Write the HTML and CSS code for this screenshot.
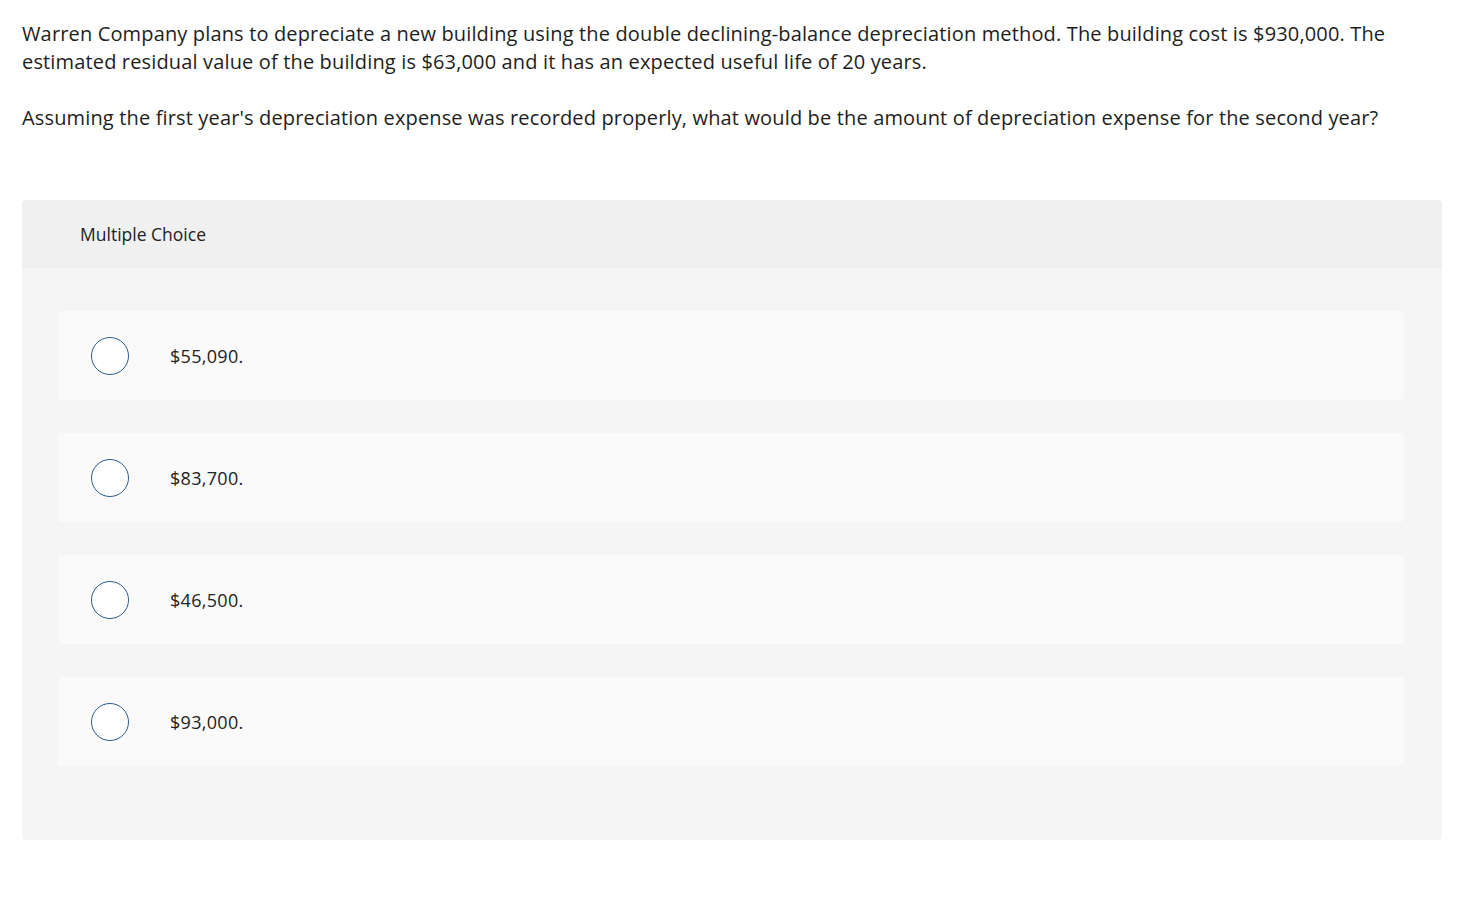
FILE: index.html
```html
<!DOCTYPE html>
<html>
<head>
<meta charset="utf-8">
<link rel="stylesheet" href="styles.css">
</head>
<body>
<div class="page">
  <div class="question">
    <p>Warren Company plans to depreciate a new building using the double declining-balance depreciation method. The building cost is $930,000. The estimated residual value of the building is $63,000 and it has an expected useful life of 20 years.</p>
    <p>Assuming the first year's depreciation expense was recorded properly, what would be the amount of depreciation expense for the second year?</p>
  </div>
  <div class="mc">
    <div class="mc-header">Multiple Choice</div>
    <div class="mc-body">
      <div class="option"><span class="radio"></span><span class="label">$55,090.</span></div>
      <div class="option"><span class="radio"></span><span class="label">$83,700.</span></div>
      <div class="option"><span class="radio"></span><span class="label">$46,500.</span></div>
      <div class="option"><span class="radio"></span><span class="label">$93,000.</span></div>
    </div>
  </div>
</div>
</body>
</html>
```
FILE: styles.css
```css
html, body { margin: 0; padding: 0; background: #fff; }
body { font-family: "Open Sans", Lato, sans-serif; color: #1e1e1e; }
.page { padding: 20px 41px 0 22px; }
.question { max-width: 1420px; }
.question p { margin: 0 0 28px 0; font-size: 20px; line-height: 28px; letter-spacing: 0.15px; }
.question p:last-child { margin-bottom: 0; }
.mc { margin-top: 68px; width: 1420px; border-radius: 4px; overflow: hidden; background: #f5f5f5; }
.mc-header { background: #f0f0f0; height: 68px; display: flex; align-items: center; padding-left: 58px; font-size: 17.5px; color: #222; }
.mc-body { padding: 43px 38px 74px 36px; display: flex; flex-direction: column; gap: 33px; }
.option { background: #fafafa; border-radius: 4px; height: 89px; display: flex; align-items: center; padding-left: 33px; }
.radio { box-sizing: border-box; width: 38px; height: 38px; border: 1.5px solid #2d5b8c; border-radius: 50%; background: #fff; flex: none; }
.label { margin-left: 41px; font-size: 18px; letter-spacing: 0.3px; color: #222; }
```
